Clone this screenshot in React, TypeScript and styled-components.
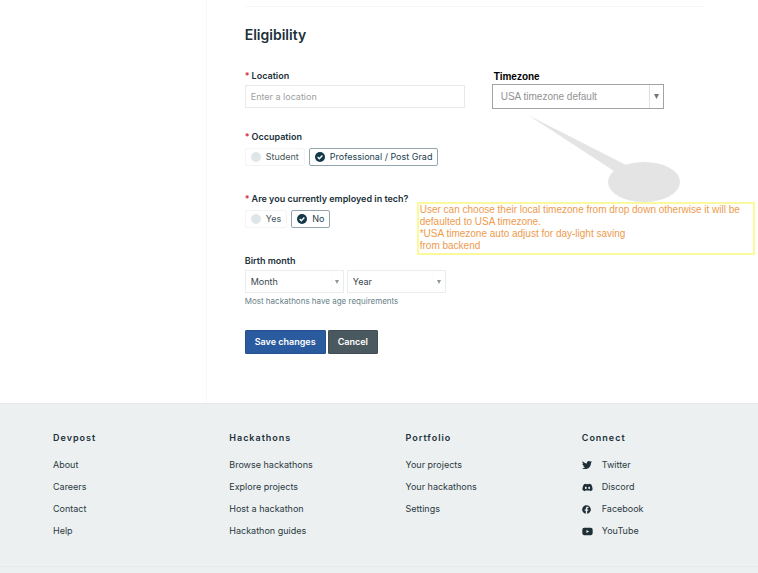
import React from "react";
import styled, { createGlobalStyle } from "styled-components";
import { FaTwitter, FaDiscord, FaFacebook, FaYoutube } from "react-icons/fa";

const GlobalStyle = createGlobalStyle`
  *, *::before, *::after { box-sizing: border-box; }
  body {
    margin: 0;
    background: #fff;
    color: #21313a;
    font-family: Inter, "Open Sans", sans-serif;
    font-size: 9px;
    line-height: 12px;
  }
  button, input, select { font: inherit; color: inherit; margin: 0; }
`;

const Page = styled.div`
  min-height: 100vh;
  display: flex;
  flex-direction: column;
  overflow-x: hidden;
`;

const Main = styled.main`
  display: grid;
  grid-template-columns: minmax(0, 3fr) minmax(0, 8fr);
`;

const Sidebar = styled.aside`
  border-right: 1px solid #f6f7f7;
`;

const Form = styled.form`
  padding: 6px 54px 49px 38px;
`;

const Title = styled.h2`
  margin: 0;
  padding: 18px 0 25px;
  border-top: 1px solid #f5f6f6;
  font-size: 14px;
  line-height: 20px;
  font-weight: 600;
`;

const Section = styled.div`
  display: grid;
  grid-template-columns: 220px 172px;
  column-gap: 27px;
`;

const Fields = styled.div`
  display: flex;
  flex-direction: column;
`;

const Field = styled.div`
  display: flex;
  flex-direction: column;
  gap: 3px;
  margin-bottom: 23px;
`;

const Group = styled.fieldset`
  margin: 0 0 27px;
  padding: 0;
  border: 0;
`;

const labelText = `
  font-weight: 600;
  line-height: 12px;
  white-space: nowrap;
`;

const Label = styled.label`${labelText}`;

const Legend = styled.legend`
  ${labelText}
  padding: 0;
  margin-bottom: 5px;
`;

const Star = styled.span`
  color: #d32f45;
  margin-right: 2px;
`;

const TextInput = styled.input`
  width: 100%;
  height: 23px;
  padding: 0 5px;
  border: 1px solid #e6eaea;
  background: #fff;
  outline: none;
  &::placeholder { color: #9b9fa1; opacity: 1; }
`;

const Options = styled.div`
  display: flex;
  gap: 4px;
`;

const Option = styled.label`
  position: relative;
  display: flex;
  align-items: center;
  gap: 5px;
  height: 18px;
  padding: 0 5px;
  border: 1px solid #f3f5f5;
  border-radius: 2px;
  color: #48565c;
  white-space: nowrap;
  cursor: pointer;
  &:has(input:checked) { border-color: #93a5ac; color: #21414e; }
`;

const Radio = styled.input`
  appearance: none;
  width: 10px;
  height: 10px;
  border-radius: 50%;
  background: #dfe6e7;
  &:checked { background: #12384a; }
  &:checked + svg { display: block; }
`;

const Tick = styled.svg`
  display: none;
  position: absolute;
  left: 5px;
  width: 10px;
  height: 10px;
  pointer-events: none;
`;

const SelectRow = styled.div`
  display: flex;
  gap: 3px;
`;

const SelectBox = styled.div<{ $strong?: boolean }>`
  display: grid;
  grid-template-columns: minmax(0, 1fr) ${(p) => (p.$strong ? 14 : 12)}px;
  width: ${(p) => (p.$strong ? "100%" : "99px")};
  height: ${(p) => (p.$strong ? 25 : 23)}px;
  border: 1px solid ${(p) => (p.$strong ? "#a3a3a3" : "#e9eded")};
  background: #fff;
`;

const Select = styled.select<{ $strong?: boolean }>`
  grid-area: 1 / 1 / 2 / 3;
  appearance: none;
  width: 100%;
  padding: 0 14px 0 ${(p) => (p.$strong ? 8 : 5)}px;
  border: 0;
  outline: none;
  background: transparent;
  color: ${(p) => (p.$strong ? "#929292" : "#37464c")};
  font-family: ${(p) => (p.$strong ? '"Liberation Sans", Arial, sans-serif' : "inherit")};
  font-size: ${(p) => (p.$strong ? 10 : 9)}px;
`;

const Arrow = styled.span<{ $strong?: boolean }>`
  grid-area: 1 / 2;
  display: grid;
  place-items: center;
  border-left: 1px solid ${(p) => (p.$strong ? "#e0e0e0" : "#fafbfb")};
  pointer-events: none;
  svg { width: ${(p) => (p.$strong ? 5 : 4)}px; height: ${(p) => (p.$strong ? 5 : 4)}px; }
`;

const Hint = styled.small`
  font-size: 8px;
  line-height: 10px;
  color: #687f89;
`;

const Actions = styled.div`
  display: flex;
  gap: 2px;
  margin-top: 1px;
`;

const Button = styled.button<{ $primary?: boolean }>`
  height: 24px;
  padding: 0 9px;
  border: 1px solid ${(p) => (p.$primary ? "#24518f" : "#414f55")};
  border-radius: 1px;
  background: ${(p) => (p.$primary ? "#2b5b9f" : "#4a595f")};
  color: #fff;
  font-weight: 600;
  cursor: pointer;
`;

const Timezone = styled.div`
  position: relative;
  align-self: start;
`;

const TimezoneLabel = styled.label`
  display: block;
  padding: 2px;
  font: bold 10px/10px "Liberation Sans", Arial, sans-serif;
  color: #000;
`;

const Callout = styled.svg`
  position: absolute;
  left: 36px;
  top: 44px;
  width: 152px;
  height: 89px;
`;

const Note = styled.p`
  position: absolute;
  left: -75px;
  top: 132px;
  width: 338px;
  margin: 0;
  padding: 0 1px 1px;
  border: 2px solid #fafa9c;
  color: #ee9a4d;
  font: 10px/12px "Liberation Sans", Arial, sans-serif;
  white-space: nowrap;
`;

const Footer = styled.footer`
  flex: 1;
  border-top: 1px solid #e6eaeb;
  background: #ecf0f1;
`;

const Columns = styled.div`
  display: grid;
  grid-template-columns: repeat(4, minmax(0, 1fr));
  padding: 28px 0 24px 53px;
  border-bottom: 1px solid #e5eaeb;
`;

const ColumnTitle = styled.h3`
  margin: 0 0 10px;
  font-size: 9px;
  line-height: 12px;
  font-weight: 600;
  letter-spacing: 1px;
`;

const Links = styled.ul`
  margin: 0;
  padding: 0;
  list-style: none;
`;

const FooterLink = styled.a`
  display: flex;
  align-items: center;
  height: 22px;
  color: #2a393f;
  text-decoration: none;
`;

const IconSlot = styled.span<{ $size: number }>`
  display: flex;
  width: 20px;
  color: #1f2f36;
  svg { width: ${(p) => p.$size}px; height: ${(p) => p.$size}px; }
`;

function Triangle({ strong }: { strong?: boolean }) {
  return (
    <Arrow $strong={strong} aria-hidden="true">
      <svg viewBox="0 0 10 10">
        <path d="M0 0H10L5 10Z" fill={strong ? "#747474" : "#8d9699"} />
      </svg>
    </Arrow>
  );
}

function Choice({ name, text, checked }: { name: string; text: string; checked?: boolean }) {
  return (
    <Option>
      <Radio type="radio" name={name} value={text} defaultChecked={checked} />
      <Tick viewBox="0 0 10 10" aria-hidden="true">
        <path d="M2.7 5.1L4.3 6.7L7.4 3.5" fill="none" stroke="#fff" strokeWidth="1.4" />
      </Tick>
      {text}
    </Option>
  );
}

const columns = [
  { title: "Devpost", links: ["About", "Careers", "Contact", "Help"] },
  {
    title: "Hackathons",
    links: ["Browse hackathons", "Explore projects", "Host a hackathon", "Hackathon guides"],
  },
  { title: "Portfolio", links: ["Your projects", "Your hackathons", "Settings"] },
  { title: "Connect", links: ["Twitter", "Discord", "Facebook", "YouTube"] },
];

const icons: Record<string, { Icon: React.ComponentType; size: number }> = {
  Twitter: { Icon: FaTwitter, size: 10 },
  Discord: { Icon: FaDiscord, size: 11 },
  Facebook: { Icon: FaFacebook, size: 9 },
  YouTube: { Icon: FaYoutube, size: 11 },
};

export default function App() {
  return (
    <Page>
      <GlobalStyle />
      <Main>
        <Sidebar />
        <Form onSubmit={(e) => e.preventDefault()}>
          <Title>Eligibility</Title>
          <Section>
            <Fields>
              <Field>
                <Label htmlFor="location"><Star>*</Star>Location</Label>
                <TextInput id="location" placeholder="Enter a location" />
              </Field>
              <Group>
                <Legend><Star>*</Star>Occupation</Legend>
                <Options>
                  <Choice name="occupation" text="Student" />
                  <Choice name="occupation" text="Professional / Post Grad" checked />
                </Options>
              </Group>
              <Group>
                <Legend><Star>*</Star>Are you currently employed in tech?</Legend>
                <Options>
                  <Choice name="employed" text="Yes" />
                  <Choice name="employed" text="No" checked />
                </Options>
              </Group>
              <Field>
                <Label htmlFor="month">Birth month</Label>
                <SelectRow>
                  <SelectBox>
                    <Select id="month"><option>Month</option></Select>
                    <Triangle />
                  </SelectBox>
                  <SelectBox>
                    <Select aria-label="Year"><option>Year</option></Select>
                    <Triangle />
                  </SelectBox>
                </SelectRow>
                <Hint>Most hackathons have age requirements</Hint>
              </Field>
            </Fields>
            <Timezone>
              <TimezoneLabel htmlFor="timezone">Timezone</TimezoneLabel>
              <SelectBox $strong>
                <Select id="timezone" $strong><option>USA timezone default</option></Select>
                <Triangle strong />
              </SelectBox>
              <Callout viewBox="0 0 152 89" aria-hidden="true">
                <g fill="#e4e4e4">
                  <path d="M0 1L98 51L108 58L94 66L86 57Z" />
                  <ellipse cx="116" cy="68" rx="36" ry="20" />
                </g>
              </Callout>
              <Note>
                User can choose their local timezone from drop down otherwise it will be<br />
                defaulted to USA timezone.<br />
                *USA timezone auto adjust for day-light saving<br />
                from backend
              </Note>
            </Timezone>
          </Section>
          <Actions>
            <Button type="submit" $primary>Save changes</Button>
            <Button type="button">Cancel</Button>
          </Actions>
        </Form>
      </Main>
      <Footer>
        <Columns>
          {columns.map(({ title, links }) => (
            <nav key={title} aria-label={title}>
              <ColumnTitle>{title}</ColumnTitle>
              <Links>
                {links.map((text) => {
                  const entry = icons[text];
                  return (
                    <li key={text}>
                      <FooterLink href="#">
                        {entry && <IconSlot $size={entry.size}><entry.Icon /></IconSlot>}
                        {text}
                      </FooterLink>
                    </li>
                  );
                })}
              </Links>
            </nav>
          ))}
        </Columns>
      </Footer>
    </Page>
  );
}
